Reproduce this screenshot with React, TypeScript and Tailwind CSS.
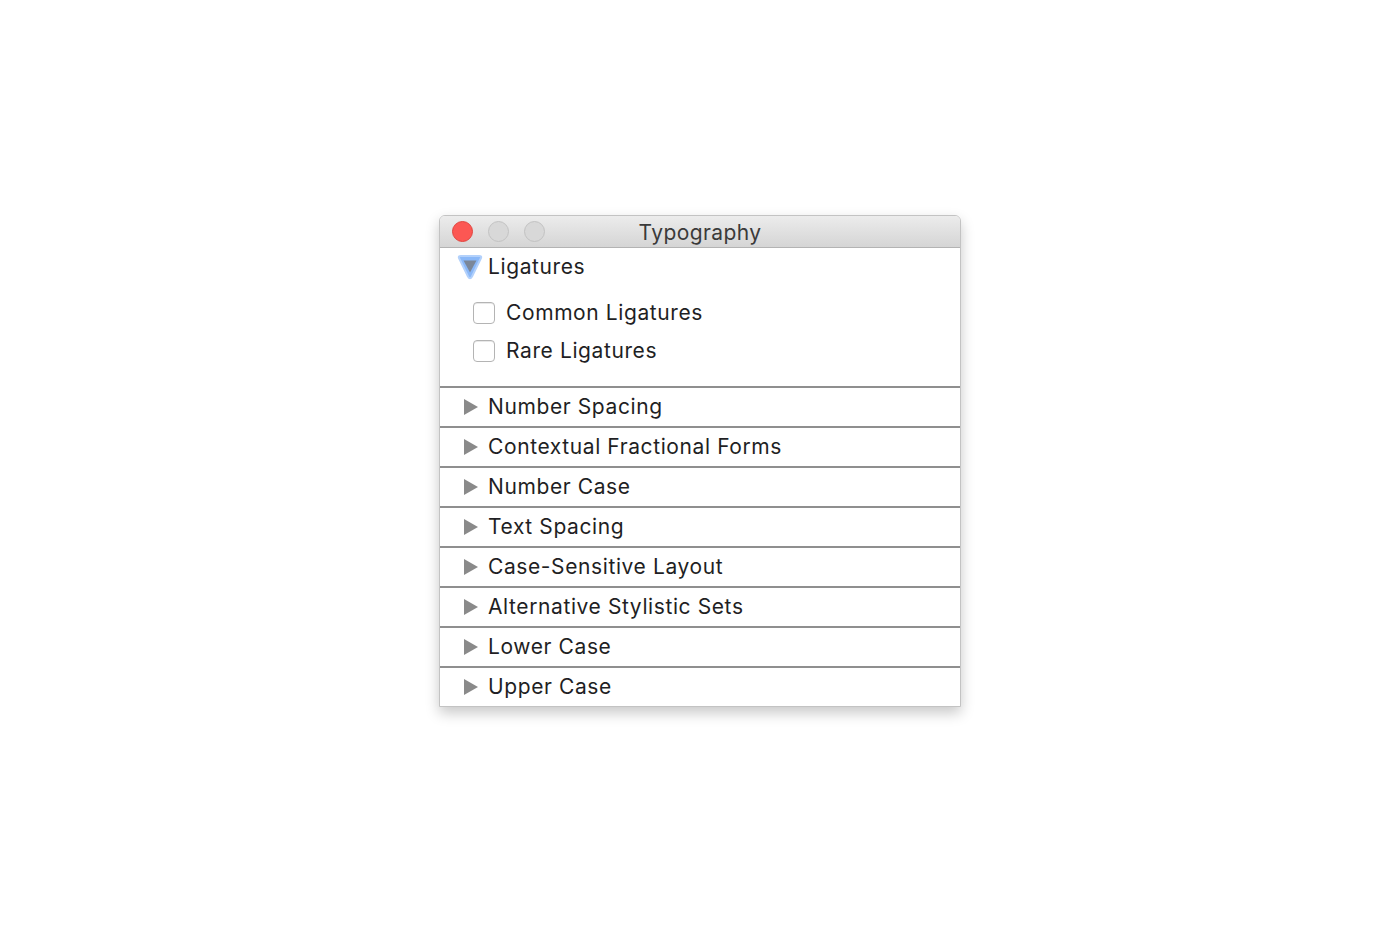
import React from "react";

const rows = [
  "Number Spacing",
  "Contextual Fractional Forms",
  "Number Case",
  "Text Spacing",
  "Case-Sensitive Layout",
  "Alternative Stylistic Sets",
  "Lower Case",
  "Upper Case",
];

function RightTriangle() {
  return (
    <svg width="16" height="18" viewBox="0 0 16 18" className="shrink-0">
      <path d="M1 1 L15 9 L1 17 Z" fill="#8a8a8a" />
    </svg>
  );
}

function DownTriangle() {
  return (
    <svg width="28" height="28" viewBox="0 0 28 28" className="shrink-0">
      <path
        d="M3 5 Q2 3 5 3 L23 3 Q26 3 25 5 L16 23.5 Q14 27 12 23.5 L3 5 Z"
        fill="#8ab8f8"
        stroke="#b3d1fb"
        strokeWidth="2"
        strokeLinejoin="round"
      />
      <path d="M7.5 7.5 L20.5 7.5 L14 19.5 Z" fill="#7b8799" />
    </svg>
  );
}

function Checkbox({ label }: { label: string }) {
  return (
    <div className="flex items-center h-[38px] pl-[33px]">
      <div className="w-[22px] h-[22px] rounded-[4px] border border-[#b4b4b4] bg-white shadow-[inset_0_1px_0_#e8e8e8]" />
      <span className="ml-[11px]">{label}</span>
    </div>
  );
}

export default function App() {
  return (
    <main
      className="w-screen h-screen bg-white pt-[215px] text-[#1f1f24] text-[21px] tracking-[0.6px]"
      style={{ fontFamily: "Inter, 'Liberation Sans', sans-serif" }}
    >
      <div className="mx-auto w-[522px] rounded-t-[6px] border border-[#c3c3c3] bg-white shadow-[0_6px_14px_rgba(0,0,0,0.22)] overflow-hidden">
        <div className="relative flex items-center h-[32px] bg-gradient-to-b from-[#ececec] to-[#d5d5d5] border-b border-[#b3b3b3] px-[12px] gap-[15px]">
          <div className="w-[21px] h-[21px] rounded-full bg-[#fc5753] border border-[#e0443e]" />
          <div className="w-[21px] h-[21px] rounded-full bg-[#d8d8d8] border border-[#c2c2c2]" />
          <div className="w-[21px] h-[21px] rounded-full bg-[#d8d8d8] border border-[#c2c2c2]" />
          <div className="absolute inset-0 flex items-center justify-center pt-[2px] text-[#3a3a3a] tracking-[0.4px]">
            Typography
          </div>
        </div>

        <div className="h-[138px]">
          <div className="flex items-center h-[38px] pl-[16px]">
            <DownTriangle />
            <span className="ml-[4px]">Ligatures</span>
          </div>
          <div className="pt-[8px]">
            <Checkbox label="Common Ligatures" />
            <Checkbox label="Rare Ligatures" />
          </div>
        </div>

        {rows.map((r) => (
          <div
            key={r}
            className="flex items-center h-[40px] border-t-2 border-[#8f8f8f] pl-[23px]"
          >
            <RightTriangle />
            <span className="ml-[9px]">{r}</span>
          </div>
        ))}
      </div>
    </main>
  );
}
